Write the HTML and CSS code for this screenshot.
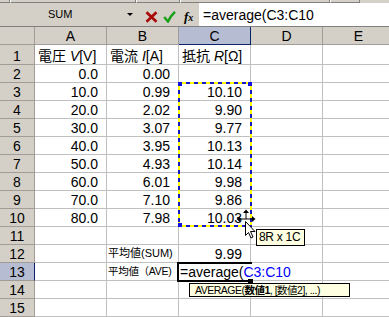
FILE: index.html
```html
<!DOCTYPE html>
<html lang="ja">
  <head>
    <meta charset="UTF-8" />
    <title>average</title>
    <link rel="stylesheet" href="styles.css">
  </head>
  <body>
    <div class="topstrip">
      <span class="s1"></span><span class="s2"></span><span class="s3"></span><span class="s4"></span><span class="s5"></span>
    </div>
    <div class="fbar">
      <div class="namebox">
        <span class="name">SUM</span>
        <span class="drop"></span>
      </div>
      <div class="fbtns">
        <svg class="ic-x" width="13" height="12" viewBox="0 0 13 12">
          <path d="M1.5 1.2 L11.5 10.8 M11.5 1.2 L1.5 10.8" stroke="#a80808" stroke-width="2.6" fill="none" />
        </svg>
        <svg class="ic-ok" width="13" height="12" viewBox="0 0 13 12">
          <path d="M1.2 6 L5 10.5 Q7.5 5 12 0.8" stroke="#18a018" stroke-width="2.4" fill="none" />
        </svg>
        <span class="fx">f<small>x</small></span>
      </div>
      <div class="finput">=average(C3:C10</div>
    </div>

    <div class="sheet">
      <div class="grid">
        <div class="corner"></div>
        <div class="ch">A</div><div class="ch">B</div><div class="ch sel">C</div><div class="ch">D</div><div class="ch">E</div>

        <div class="rh r1">1</div>
        <div class="c"><span>電圧 <i>V</i>[V]</span></div>
        <div class="c"><span>電流 <i>I</i>[A]</span></div>
        <div class="c"><span>抵抗 <i>R</i>[Ω]</span></div>
        <div class="c"></div><div class="c"></div>

        <div class="rh">2</div><div class="c n">0.0</div><div class="c n">0.00</div><div class="c"></div><div class="c"></div><div class="c"></div>
        <div class="rh">3</div><div class="c n">10.0</div><div class="c n">0.99</div><div class="c n">10.10</div><div class="c"></div><div class="c"></div>
        <div class="rh">4</div><div class="c n">20.0</div><div class="c n">2.02</div><div class="c n">9.90</div><div class="c"></div><div class="c"></div>
        <div class="rh">5</div><div class="c n">30.0</div><div class="c n">3.07</div><div class="c n">9.77</div><div class="c"></div><div class="c"></div>
        <div class="rh">6</div><div class="c n">40.0</div><div class="c n">3.95</div><div class="c n">10.13</div><div class="c"></div><div class="c"></div>
        <div class="rh">7</div><div class="c n">50.0</div><div class="c n">4.93</div><div class="c n">10.14</div><div class="c"></div><div class="c"></div>
        <div class="rh">8</div><div class="c n">60.0</div><div class="c n">6.01</div><div class="c n">9.98</div><div class="c"></div><div class="c"></div>
        <div class="rh">9</div><div class="c n">70.0</div><div class="c n">7.10</div><div class="c n">9.86</div><div class="c"></div><div class="c"></div>
        <div class="rh">10</div><div class="c n">80.0</div><div class="c n">7.98</div><div class="c n">10.03</div><div class="c"></div><div class="c"></div>
        <div class="rh">11</div><div class="c"></div><div class="c"></div><div class="c"></div><div class="c"></div><div class="c"></div>
        <div class="rh">12</div><div class="c"></div><div class="c lbl">平均値(SUM)</div><div class="c n">9.99</div><div class="c"></div><div class="c"></div>
        <div class="rh sel">13</div><div class="c"></div><div class="c lbl ave">平均値（AVE)</div><div class="c"></div><div class="c"></div><div class="c"></div>
        <div class="rh">14</div><div class="c"></div><div class="c"></div><div class="c"></div><div class="c"></div><div class="c"></div>
        <div class="rh">15</div><div class="c"></div><div class="c"></div><div class="c"></div><div class="c"></div><div class="c"></div>
      </div>

      <!-- things drawn over the sheet -->
      <div class="marquee"></div>
      <div class="active"></div>
      <div class="edit">=average(<span class="ref">C3:C10</span></div>
      <div class="handle"></div>
      <div class="tip tip-size">8R x 1C</div>
      <div class="tip tip-fn">AVERAGE(<b>数値1</b>, [数値2], ...)</div>
      <svg class="cursor" width="22" height="32" viewBox="0 0 22 32">
        <path d="M10 3 V10 M2 10 H18" stroke="#000" stroke-width="1" fill="none" />
        <polygon points="10,0.5 7,4 13,4" fill="#000" />
        <polygon points="0.5,10 4,7 4,13" fill="#000" />
        <polygon points="19.5,10 16,7 16,13" fill="#000" />
        <polygon points="9.5,12.5 9.5,26.5 12.5,23.5 15,29 17,28 14.5,22.5 19,22.5" fill="#fff" stroke="#000" stroke-width="1" stroke-linejoin="miter" />
      </svg>
    </div>
  </body>
</html>
```

FILE: styles.css
```css
* {
  padding: 0;
  margin: 0;
  box-sizing: border-box;
}
body {
  width: 389px;
  height: 317px;
  overflow: hidden;
  background: #fff;
  color: #000;
  font-family: "Liberation Sans", "Noto Sans CJK JP", sans-serif;
  font-size: 14px;
}

/* toolbar edge above the formula bar */
.topstrip {
  display: flex;
  height: 3px;
  background: #d4d0c8;
}
.topstrip span {
  height: 3px;
  border-right: 1px solid #808080;
  border-bottom: 1px solid #808080;
}
.topstrip .s1 { width: 10px; }
.topstrip .s2 { width: 126px; border-left: 1px solid #fff; }
.topstrip .s3 { width: 44px; border-left: 1px solid #fff; }
.topstrip .s4 { width: 150px; border-left: 1px solid #fff; }
.topstrip .s5 { width: 30px; border-left: 1px solid #fff; }

/* formula bar */
.fbar {
  display: flex;
  height: 24px;
  background: #d4d0c8;
  border-bottom: 1px solid #808080;
}
.namebox {
  width: 138px;
  display: flex;
  align-items: center;
}
.namebox .name {
  flex: 1;
  padding-left: 48px;
  font-size: 11px;
  margin-bottom: 2px;
}
.drop {
  width: 0;
  height: 0;
  border-left: 3px solid transparent;
  border-right: 3px solid transparent;
  border-top: 3px solid #000;
  margin-right: 5px;
}
.fbtns {
  width: 61px;
  display: flex;
  align-items: flex-start;
  padding-top: 8px;
  padding-left: 7px;
}
.ic-ok {
  margin-left: 5px;
}
.fx {
  margin-left: 8px;
  margin-top: -2px;
  font-family: "Liberation Serif", serif;
  font-style: italic;
  font-weight: bold;
  font-size: 13px;
}
.fx small {
  font-size: 10px;
}
.finput {
  flex: 1;
  background: #fff;
  padding: 2px 0 0 4px;
  line-height: 21px;
  white-space: nowrap;
}

/* sheet */
.sheet {
  position: relative;
}
.grid {
  display: grid;
  grid-template-columns: 35px repeat(5, 72px);
  grid-template-rows: 18px 20px repeat(14, 18px);
}
.corner,
.ch,
.rh {
  background: #d4d0c8;
  border-right: 1px solid #a19d96;
  border-bottom: 1px solid #a19d96;
  display: flex;
  justify-content: center;
  align-items: flex-end;
  line-height: 15px;
}
.sel {
  background: #b6bdd2;
}
.ch.sel {
  border-bottom-color: #0a246a;
  border-right-color: #0a246a;
}
.rh.sel {
  border-right-color: #0a246a;
}
.c {
  border-right: 1px solid #c0c0c0;
  border-bottom: 1px solid #c0c0c0;
  display: flex;
  align-items: flex-end;
  padding: 0 3px;
  line-height: 15px;
  white-space: nowrap;
}
.c.n {
  justify-content: flex-end;
  padding-right: 8px;
}
.c.lbl {
  font-size: 11px;
  padding-left: 1px;
  padding-bottom: 3px;
  line-height: 12px;
}
.c.ave {
  font-size: 10.5px;
  letter-spacing: -0.3px;
}

/* overlays */
.marquee {
  position: absolute;
  left: 178px;
  top: 55px;
  width: 74px;
  height: 145px;
  background:
    linear-gradient(#1010e0, #1010e0) left top / 4px 4px no-repeat,
    linear-gradient(#1010e0, #1010e0) right top / 4px 4px no-repeat,
    linear-gradient(#1010e0, #1010e0) left bottom / 4px 4px no-repeat,
    repeating-linear-gradient(90deg, #1818c8 0 4px, #ffff00 4px 8px) left top / 100% 2px no-repeat,
    repeating-linear-gradient(90deg, #1818c8 0 4px, #ffff00 4px 8px) left bottom / 100% 2px no-repeat,
    repeating-linear-gradient(180deg, #1818c8 0 4px, #ffff00 4px 8px) left top / 2px 100% no-repeat,
    repeating-linear-gradient(180deg, #1818c8 0 4px, #ffff00 4px 8px) right top / 2px 100% no-repeat;
}
.active {
  position: absolute;
  left: 177px;
  top: 235px;
  width: 75px;
  height: 20px;
  border: 2px solid #000;
}
.edit {
  position: absolute;
  left: 179px;
  top: 237px;
  height: 16px;
  padding: 1px 2px 0 1px;
  line-height: 15px;
  background: #fff;
  white-space: nowrap;
}
.edit .ref {
  color: #0000ff;
}
.handle {
  position: absolute;
  left: 248px;
  top: 252px;
  width: 5px;
  height: 4px;
  background: #000;
}
.tip {
  position: absolute;
  background: #ffffe1;
  border: 1px solid #000;
  white-space: nowrap;
}
.tip-size {
  left: 256px;
  top: 202px;
  width: 49px;
  height: 17px;
  font-size: 12px;
  line-height: 15px;
  padding-left: 2px;
  letter-spacing: -0.3px;
}
.tip-fn {
  left: 189px;
  top: 256px;
  width: 161px;
  height: 14px;
  font-size: 10.5px;
  line-height: 12px;
  padding-left: 5px;
  letter-spacing: -0.5px;
}
.cursor {
  position: absolute;
  left: 236px;
  top: 182px;
}
```
